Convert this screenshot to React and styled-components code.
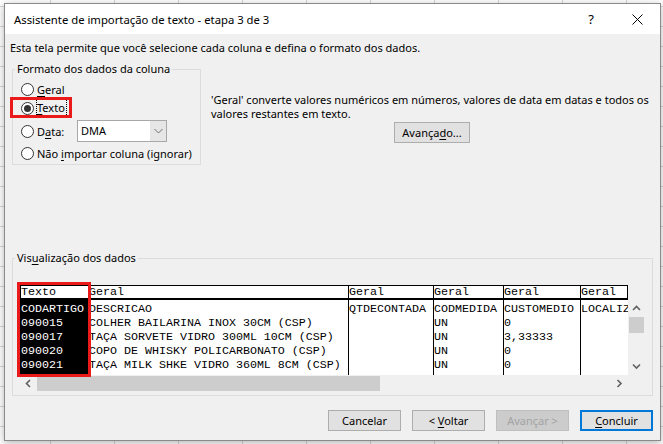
import React from "react";
import styled, { createGlobalStyle } from "styled-components";

const ui = `"Noto Sans", "Liberation Sans", sans-serif`;
const mono = `"Liberation Mono", "DejaVu Sans Mono", monospace`;

const Global = createGlobalStyle`
  html, body { margin: 0; padding: 0; height: 100%; }
  body {
    background-color: #fff;
    background-image:
      linear-gradient(to right, #d6d6d6 1px, transparent 1px),
      linear-gradient(to bottom, #d6d6d6 1px, transparent 1px);
    background-size: 64px 20px;
    background-position: 50px 6px;
    overflow: hidden;
  }
  #root { display: block; }
`;

const Dialog = styled.div`
  width: 657px;
  height: 438px;
  margin: 3px 0 0 4px;
  box-sizing: border-box;
  border: 1px solid #8a8a8a;
  background: #f0f0f0;
  box-shadow: 0 2px 8px rgba(0, 0, 0, 0.3);
  display: flex;
  flex-direction: column;
  font-family: ${ui};
  font-size: 11px;
  color: #000;
`;

const TitleBar = styled.div`
  height: 30px;
  background: #fff;
  display: flex;
  align-items: center;
  padding-left: 9px;
  flex-shrink: 0;
  font-size: 11.3px;
`;

const Title = styled.div`
  flex: 1;
  white-space: nowrap;
`;

const CaptionBtn = styled.div`
  width: 46px;
  height: 30px;
  display: flex;
  align-items: center;
  justify-content: center;
  font-size: 13px;
`;

const Body = styled.div`
  flex: 1;
  display: flex;
  flex-direction: column;
  padding: 0 7px 0 5px;
`;

const Intro = styled.div`
  margin-top: 6px;
  line-height: 15px;
  white-space: nowrap;
`;

const TopRow = styled.div`
  display: flex;
  margin-top: 7px;
`;

const Group = styled.fieldset`
  margin: 0 0 0 2px;
  padding: 0;
  border: 1px solid #dcdcdc;
  min-width: 0;
  box-sizing: border-box;
  width: ${(p) => p.$w}px;
`;

const Legend = styled.legend`
  margin-left: 2px;
  padding: 0 2px;
  line-height: 14px;
  font-size: 11px;
`;

const Mn = styled.u`
  text-decoration: underline;
  text-underline-offset: 2px;
`;

const OptionList = styled.div`
  display: flex;
  flex-direction: column;
  padding: 4px 0 2px 8px;
`;

const OptionRow = styled.div`
  position: relative;
  display: flex;
  align-items: center;
  height: ${(p) => p.$h}px;
  margin-top: ${(p) => p.$mt || 0}px;
  white-space: nowrap;
`;

const Radio = styled.span`
  width: 13px;
  height: 13px;
  box-sizing: border-box;
  border: 1px solid #333;
  border-radius: 50%;
  background: #fff;
  margin-right: 3px;
  display: flex;
  align-items: center;
  justify-content: center;
  flex-shrink: 0;
  &::after {
    content: "";
    display: ${(p) => (p.$checked ? "block" : "none")};
    width: 7px;
    height: 7px;
    border-radius: 50%;
    background: #333;
  }
`;

const FocusLabel = styled.span`
  border: 1px dotted #000;
  padding: 0 1px 1px 0;
  margin-left: -1px;
  line-height: 15px;
`;

const Highlight = styled.span`
  position: absolute;
  left: -11px;
  top: -2px;
  width: 62px;
  height: 21px;
  box-sizing: border-box;
  border: 3px solid #ea1a1a;
  pointer-events: none;
`;

const FieldLabel = styled.span`
  width: 40px;
`;

const Combo = styled.div`
  width: 90px;
  height: 22px;
  box-sizing: border-box;
  border: 1px solid #a8a8a8;
  background: #fff;
  display: flex;
`;

const ComboText = styled.div`
  flex: 1;
  padding-left: 3px;
  line-height: 20px;
`;

const ComboBtn = styled.div`
  width: 16px;
  background: #e6e6e6;
  display: flex;
  align-items: center;
  justify-content: center;
`;

const Desc = styled.div`
  flex: 1;
  margin-left: 10px;
  padding-top: 31px;
  display: flex;
  flex-direction: column;
  align-items: center;
`;

const DescText = styled.div`
  align-self: stretch;
  line-height: 14px;
`;

const Button = styled.div`
  height: 21px;
  box-sizing: border-box;
  display: flex;
  align-items: center;
  justify-content: center;
  white-space: nowrap;
  background: ${(p) => (p.$disabled ? "#cccccc" : "#e1e1e1")};
  border: ${(p) =>
    p.$primary ? "2px solid #0078d7" : p.$disabled ? "1px solid #bfbfbf" : "1px solid #adadad"};
  color: ${(p) => (p.$disabled ? "#a3a3a3" : "#000")};
  margin-top: ${(p) => p.$mt || 0}px;
  width: ${(p) => p.$w || 73}px;
`;

const PreviewGroup = styled(Group)`
  margin-top: 86px;
`;

const PreviewInner = styled.div`
  padding: 20px 0 3px 7px;
`;

const Preview = styled.div`
  position: relative;
  display: grid;
  grid-template-columns: 608px 17px;
  grid-template-rows: 15px 75px 17px;
  width: 625px;
  font-family: ${mono};
  font-size: 11.67px;
`;

const HeaderRow = styled.div`
  display: flex;
  box-sizing: border-box;
  border-top: 1px solid #000;
  border-bottom: 2px solid #000;
  background: #fff;
`;

const HeaderCell = styled.div`
  width: ${(p) => p.$w}px;
  box-sizing: border-box;
  border-left: 1px solid #000;
  border-right: ${(p) => (p.$last ? "1px solid #000" : "0")};
  line-height: 12px;
  white-space: nowrap;
`;

const DataArea = styled.div`
  display: flex;
  background: #fff;
  overflow: hidden;
`;

const DataCol = styled.div`
  width: ${(p) => p.$w}px;
  flex-shrink: 0;
  box-sizing: border-box;
  border-left: 1px solid #000;
  background: ${(p) => (p.$dark ? "#000" : "#fff")};
  color: ${(p) => (p.$dark ? "#fff" : "#000")};
  padding-top: 2px;
  white-space: nowrap;
`;

const Cell = styled.div`
  height: 14px;
  line-height: 14px;
`;

const VScroll = styled.div`
  background: #f0f0f0;
  display: flex;
  flex-direction: column;
`;

const HScroll = styled.div`
  background: #f0f0f0;
  display: flex;
  align-items: center;
`;

const Corner = styled.div`
  background: ${(p) => (p.$fill ? "#f0f0f0" : "transparent")};
`;

const Arrow = styled.div`
  width: 17px;
  height: 17px;
  display: flex;
  align-items: center;
  justify-content: center;
  flex-shrink: 0;
`;

const VThumb = styled.div`
  height: 16px;
  margin: 0 1px;
  background: #cdcdcd;
`;

const HThumb = styled.div`
  width: ${(p) => p.$w}px;
  height: 15px;
  background: #cdcdcd;
`;

const Spacer = styled.div`
  flex: 1;
`;

const ColumnMark = styled.div`
  position: absolute;
  left: -3px;
  top: -3px;
  width: 74px;
  height: 95px;
  box-sizing: border-box;
  border: 3px solid #ea1a1a;
  pointer-events: none;
`;

const ButtonRow = styled.div`
  display: flex;
  justify-content: flex-end;
  gap: 11px;
  margin-top: 14px;
`;

const Chevron = ({ dir }) => {
  const paths = {
    up: "M1 5 L4.5 1.5 L8 5",
    down: "M1 1.5 L4.5 5 L8 1.5",
    left: "M5 1 L1.5 4.5 L5 8",
    right: "M1.5 1 L5 4.5 L1.5 8",
  };
  const vertical = dir === "up" || dir === "down";
  return (
    <svg width={vertical ? 9 : 7} height={vertical ? 7 : 9} viewBox={vertical ? "0 0 9 7" : "0 0 7 9"}>
      <path d={paths[dir]} fill="none" stroke="#606060" strokeWidth="1.6" />
    </svg>
  );
};

const columns = [
  { w: 68, head: "Texto", dark: true, cells: ["CODARTIGO", "090015", "090017", "090020", "090021"] },
  {
    w: 260,
    head: "Geral",
    cells: [
      "DESCRICAO",
      "COLHER BAILARINA INOX 30CM (CSP)",
      "TAÇA SORVETE VIDRO 300ML 10CM (CSP)",
      "COPO DE WHISKY POLICARBONATO (CSP)",
      "TAÇA MILK SHKE VIDRO 360ML 8CM (CSP)",
    ],
  },
  { w: 85, head: "Geral", cells: ["QTDECONTADA", "", "", "", ""] },
  { w: 70, head: "Geral", cells: ["CODMEDIDA", "UN", "UN", "UN", "UN"] },
  { w: 77, head: "Geral", cells: ["CUSTOMEDIO", "0", "3,33333", "0", "0"] },
  { w: 48, head: "Geral", cells: ["LOCALIZ", "", "", "", ""] },
];

export default function App() {
  return (
    <>
      <Global />
      <Dialog>
        <TitleBar>
          <Title>Assistente de importação de texto - etapa 3 de 3</Title>
          <CaptionBtn>?</CaptionBtn>
          <CaptionBtn>
            <svg width="11" height="11" viewBox="0 0 11 11">
              <path d="M0.5 0.5 L10.5 10.5 M10.5 0.5 L0.5 10.5" stroke="#000" strokeWidth="1" />
            </svg>
          </CaptionBtn>
        </TitleBar>
        <Body>
          <Intro>Esta tela permite que você selecione cada coluna e defina o formato dos dados.</Intro>
          <TopRow>
            <Group $w={189}>
              <Legend>Formato dos dados da coluna</Legend>
              <OptionList>
                <OptionRow $h={18}>
                  <Radio />
                  <span>
                    <Mn>G</Mn>eral
                  </span>
                </OptionRow>
                <OptionRow $h={18} $mt={1}>
                  <Highlight />
                  <Radio $checked />
                  <FocusLabel>
                    <Mn>T</Mn>exto
                  </FocusLabel>
                </OptionRow>
                <OptionRow $h={22} $mt={3}>
                  <Radio />
                  <FieldLabel>
                    D<Mn>a</Mn>ta:
                  </FieldLabel>
                  <Combo>
                    <ComboText>DMA</ComboText>
                    <ComboBtn>
                      <svg width="9" height="6" viewBox="0 0 9 6">
                        <path d="M0.5 1 L4.5 5 L8.5 1" fill="none" stroke="#707070" strokeWidth="1" />
                      </svg>
                    </ComboBtn>
                  </Combo>
                </OptionRow>
                <OptionRow $h={18} $mt={2}>
                  <Radio />
                  <span>
                    Não <Mn>i</Mn>mportar coluna (ignorar)
                  </span>
                </OptionRow>
              </OptionList>
            </Group>
            <Desc>
              <DescText>
                'Geral' converte valores numéricos em números, valores de data em datas e todos os valores
                restantes em texto.
              </DescText>
              <Button $mt={1} $w={76}>
                <span>
                  Avança<Mn>d</Mn>o...
                </span>
              </Button>
            </Desc>
          </TopRow>
          <PreviewGroup $w={641}>
            <Legend>
              Vis<Mn>u</Mn>alização dos dados
            </Legend>
            <PreviewInner>
              <Preview>
                <HeaderRow>
                  {columns.map((c, i) => (
                    <HeaderCell key={i} $w={c.w} $last={i === columns.length - 1}>
                      {c.head}
                    </HeaderCell>
                  ))}
                </HeaderRow>
                <Corner />
                <DataArea>
                  {columns.map((c, i) => (
                    <DataCol key={i} $w={c.w} $dark={c.dark}>
                      {c.cells.map((t, j) => (
                        <Cell key={j}>{t}</Cell>
                      ))}
                    </DataCol>
                  ))}
                </DataArea>
                <VScroll>
                  <Arrow>
                    <Chevron dir="up" />
                  </Arrow>
                  <VThumb />
                  <Spacer />
                  <Arrow>
                    <Chevron dir="down" />
                  </Arrow>
                </VScroll>
                <HScroll>
                  <Arrow>
                    <Chevron dir="left" />
                  </Arrow>
                  <HThumb $w={343} />
                  <Spacer />
                  <Arrow>
                    <Chevron dir="right" />
                  </Arrow>
                </HScroll>
                <Corner $fill />
                <ColumnMark />
              </Preview>
            </PreviewInner>
          </PreviewGroup>
          <ButtonRow>
            <Button>
              <span>Cancelar</span>
            </Button>
            <Button>
              <span>
                &lt; <Mn>V</Mn>oltar
              </span>
            </Button>
            <Button $disabled>
              <span>Avançar &gt;</span>
            </Button>
            <Button $primary>
              <span>
                <Mn>C</Mn>oncluir
              </span>
            </Button>
          </ButtonRow>
        </Body>
      </Dialog>
    </>
  );
}
